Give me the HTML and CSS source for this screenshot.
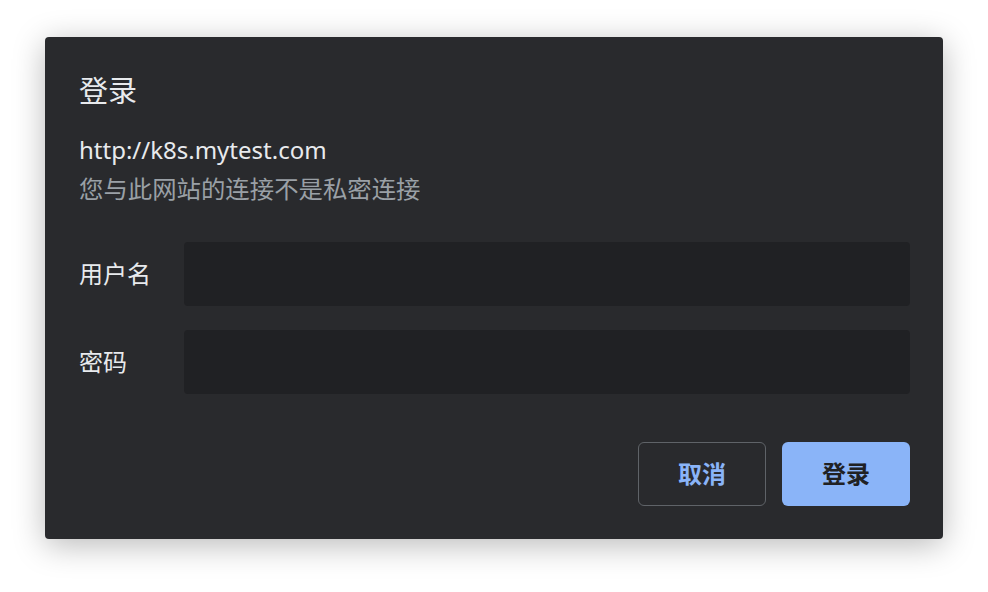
FILE: index.html
```html
<!DOCTYPE html>
<html lang="zh-CN">
<head>
    <meta charset="UTF-8">
    <title>登录</title>
    <link rel="stylesheet" href="styles.css">
</head>
<body>
    <div class="dialog">
        <h1 class="title">登录</h1>
        <div class="origin">http://k8s.mytest.com</div>
        <div class="note">您与此网站的连接不是私密连接</div>

        <div class="form">
            <label class="label" for="user">用户名</label>
            <input class="field" id="user" type="text">
            <label class="label" for="pass">密码</label>
            <input class="field" id="pass" type="password">
        </div>

        <div class="actions">
            <button class="btn btn-cancel">取消</button>
            <button class="btn btn-ok">登录</button>
        </div>
    </div>
</body>
</html>
```

FILE: styles.css
```css
body {
    margin: 0;
    background: #ffffff;
    font-family: "Noto Sans", "Noto Sans CJK SC", sans-serif;
    width: 988px;
    height: 592px;
    overflow: hidden;
}
.dialog {
    box-sizing: border-box;
    margin: 37px 0 0 45px;
    width: 898px;
    height: 502px;
    padding: 37px 33px 33px 34px;
    background: #292a2d;
    border-radius: 4px;
    box-shadow: 0 6px 32px rgba(0, 0, 0, 0.28);
    color: #e8eaed;
}
.title {
    margin: 0;
    font-size: 29px;
    font-weight: normal;
    line-height: 34px;
}
.origin {
    margin-top: 22px;
    font-size: 24px;
    line-height: 39px;
}
.note {
    font-size: 24.4px;
    line-height: 39px;
    color: #9aa0a6;
}
.form {
    margin-top: 34px;
    display: grid;
    grid-template-columns: 105px 1fr;
    grid-auto-rows: 64px;
    row-gap: 24px;
    align-items: center;
}
.label {
    font-size: 24px;
    line-height: 60px;
    color: #e8eaed;
}
.field {
    box-sizing: border-box;
    height: 64px;
    width: 100%;
    border: none;
    border-radius: 4px;
    background: #202124;
    color: #e8eaed;
    outline: none;
}
.actions {
    margin-top: 48px;
    display: flex;
    justify-content: flex-end;
    gap: 16px;
}
.btn {
    box-sizing: border-box;
    width: 128px;
    height: 64px;
    padding: 0 0 3px;
    border-radius: 6px;
    font-family: inherit;
    font-size: 24px;
    font-weight: bold;
    cursor: pointer;
}
.btn-cancel {
    background: transparent;
    border: 1px solid #5f6368;
    color: #8ab4f8;
}
.btn-ok {
    background: #8ab4f8;
    border: none;
    color: #202124;
}
```
